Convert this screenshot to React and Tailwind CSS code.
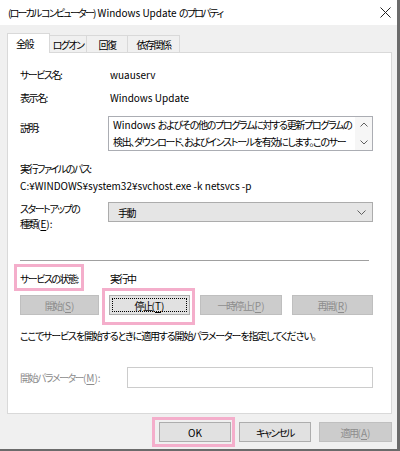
import React from 'react'

const font = "font-['Noto_Sans_CJK_JP','Noto_Sans',sans-serif] [font-feature-settings:'palt']"

// latin runs keep normal spacing; the dialog itself is tightened for the kana
function L({ children, className = '' }) {
  return <span className={'tracking-normal ' + className}>{children}</span>
}

// accelerator key, underlined like the Win32 dialog
function Key({ k }) {
  return (
    <span className="tracking-normal">
      (<span className="underline underline-offset-2">{k}</span>)
    </span>
  )
}

function Btn({ children, disabled, focused, className = '' }) {
  return (
    <div
      className={
        'relative flex items-center justify-center h-[20px] border ' +
        (disabled
          ? 'bg-[#cccccc] border-[#bfbfbf] text-[#8c8c8c] '
          : 'bg-[#e1e1e1] border-[#adadad] text-black ') +
        className
      }
    >
      {focused && <span className="absolute inset-[2px] border border-dotted border-black" />}
      <span className="relative">{children}</span>
    </div>
  )
}

function Mark({ className }) {
  // pink annotation frame drawn over the dialog
  return <span className={'absolute border-[3px] border-[#f4aecb] pointer-events-none ' + className} />
}

export default function App() {
  return (
    <div className={'w-[400px] h-[451px] bg-[#f0f0f0] border-r-[3px] border-b-[2px] border-[#6b6b6b] flex flex-col text-[10px] tracking-[-1.5px] text-black ' + font}>
      {/* title bar */}
      <div className="h-[25px] bg-white flex items-center justify-between pl-[8px] pr-[6px] shrink-0">
        <span className="leading-[16px] whitespace-nowrap text-[10px] tracking-[-1.8px]">
          (ローカル コンピューター)<L className="ml-[3px]">Windows Update </L>のプロパティ
        </span>
        <svg width="11" height="11" viewBox="0 0 11 11" className="text-[#222]">
          <path d="M0.5 0.5 L10.5 10.5 M10.5 0.5 L0.5 10.5" stroke="currentColor" strokeWidth="1" />
        </svg>
      </div>

      {/* tabs */}
      <div className="flex items-end pl-[7px] mt-[8px] h-[19px] shrink-0">
        <div className="h-[20px] w-[43px] bg-white border border-b-0 border-[#d9d9d9] flex items-center pl-[8px] relative top-[1px] z-10">
          全般
        </div>
        <div className="h-[17px] w-[37px] border border-l-0 border-b-0 border-[#d9d9d9] flex items-center justify-center">
          ログオン
        </div>
        <div className="h-[17px] w-[41px] border border-l-0 border-b-0 border-[#d9d9d9] flex items-center justify-center">
          回復
        </div>
        <div className="h-[17px] w-[52px] border border-l-0 border-b-0 border-[#d9d9d9] flex items-center justify-center">
          依存関係
        </div>
      </div>

      {/* panel */}
      <div className="ml-[7px] w-[385px] h-[362px] bg-white border border-[#d9d9d9] pl-[12px] pr-[18px] flex flex-col shrink-0">
        <div className="flex h-[16px] leading-[16px] mt-[14px]">
          <span className="w-[90px]">サービス名:</span>
          <L>wuauserv</L>
        </div>
        <div className="flex h-[16px] leading-[16px] mt-[7px]">
          <span className="w-[90px]">表示名:</span>
          <L>Windows Update</L>
        </div>
        <div className="flex mt-[10px]">
          <span className="w-[88px] pt-[4px] leading-[16px]">説明:</span>
          <div className="flex-1 h-[35px] border border-[#abadb3] flex overflow-hidden">
            <div className="flex-1 pl-[4px] leading-[17px] overflow-hidden whitespace-nowrap -mt-[1px] tracking-[-1.3px]">
              <div><L>Windows </L>およびその他のプログラムに対する更新プログラムの</div>
              <div>検出、ダウンロード、およびインストールを有効にします。このサー</div>
              <div>ビスが無効な場合、このコンピューターのユーザーは<L> Windows</L></div>
            </div>
            <div className="w-[17px] flex flex-col items-center justify-between py-[5px] bg-[#f6f6f6]">
              <svg width="8" height="5" viewBox="0 0 8 5"><path d="M0.5 4.5 L4 1 L7.5 4.5" fill="none" stroke="#606060" strokeWidth="1" /></svg>
              <svg width="8" height="5" viewBox="0 0 8 5"><path d="M0.5 0.5 L4 4 L7.5 0.5" fill="none" stroke="#606060" strokeWidth="1" /></svg>
            </div>
          </div>
        </div>
        <div className="h-[16px] leading-[16px] mt-[10px]">実行ファイルのパス:</div>
        <div className="h-[16px] leading-[16px] mt-[1px] whitespace-nowrap tracking-normal">C:¥WINDOWS¥system32¥svchost.exe -k netsvcs -p</div>
        <div className="flex mt-[7px]">
          <div className="w-[88px] leading-[15px]">
            <div>スタートアップの</div>
            <div>種類<Key k="E" />:</div>
          </div>
          <div className="flex-1 h-[20px] mt-[1px] bg-[#e5e5e5] border border-[#acacac] flex items-center justify-between pl-[9px] pr-[6px]">
            <span>手動</span>
            <svg width="9" height="5" viewBox="0 0 9 5"><path d="M0.5 0.5 L4.5 4.5 L8.5 0.5" fill="none" stroke="#606060" strokeWidth="1" /></svg>
          </div>
        </div>

        <div className="mt-[29px] h-[2px] border-t border-[#a0a0a0] border-b border-b-white mr-[4px]" />

        <div className="flex h-[16px] leading-[16px] mt-[9px]">
          <span className="w-[90px]">
            <span className="relative">
              サービスの状態:
              <Mark className="-left-[6px] -right-[6px] -top-[7px] -bottom-[5px]" />
            </span>
          </span>
          <span>実行中</span>
        </div>

        <div className="flex gap-[10px] mt-[8px]">
          <Btn disabled className="w-[79px]">開始<Key k="S" /></Btn>
          <div className="relative">
            <Btn focused className="w-[81px]">停止<Key k="T" /></Btn>
            <Mark className="-left-[7px] -right-[5px] -top-[7px] -bottom-[10px]" />
          </div>
          <Btn disabled className="w-[82px]">一時停止<Key k="P" /></Btn>
          <Btn disabled className="w-[81px]">再開<Key k="R" /></Btn>
        </div>

        <div className="h-[16px] leading-[16px] mt-[13px] whitespace-nowrap tracking-[-1.15px]">
          ここでサービスを開始するときに適用する開始パラメーターを指定してください。
        </div>

        <div className="flex items-center mt-[23px]">
          <span className="w-[107px] text-[#8c8c8c] whitespace-nowrap">開始パラメーター<Key k="M" />:</span>
          <div className="flex-1 h-[21px] border border-[#cccccc] bg-white" />
        </div>
      </div>

      {/* dialog buttons */}
      <div className="flex justify-end gap-[8px] pr-[5px] mt-[8px]">
        <div className="relative">
          <Btn className="w-[72px] border-[#0078d7]"><L>OK</L></Btn>
          <Mark className="-left-[7px] -right-[4px] -top-[5px] -bottom-[5px]" />
        </div>
        <Btn className="w-[72px]">キャンセル</Btn>
        <Btn disabled className="w-[73px]">適用<Key k="A" /></Btn>
      </div>
    </div>
  )
}
